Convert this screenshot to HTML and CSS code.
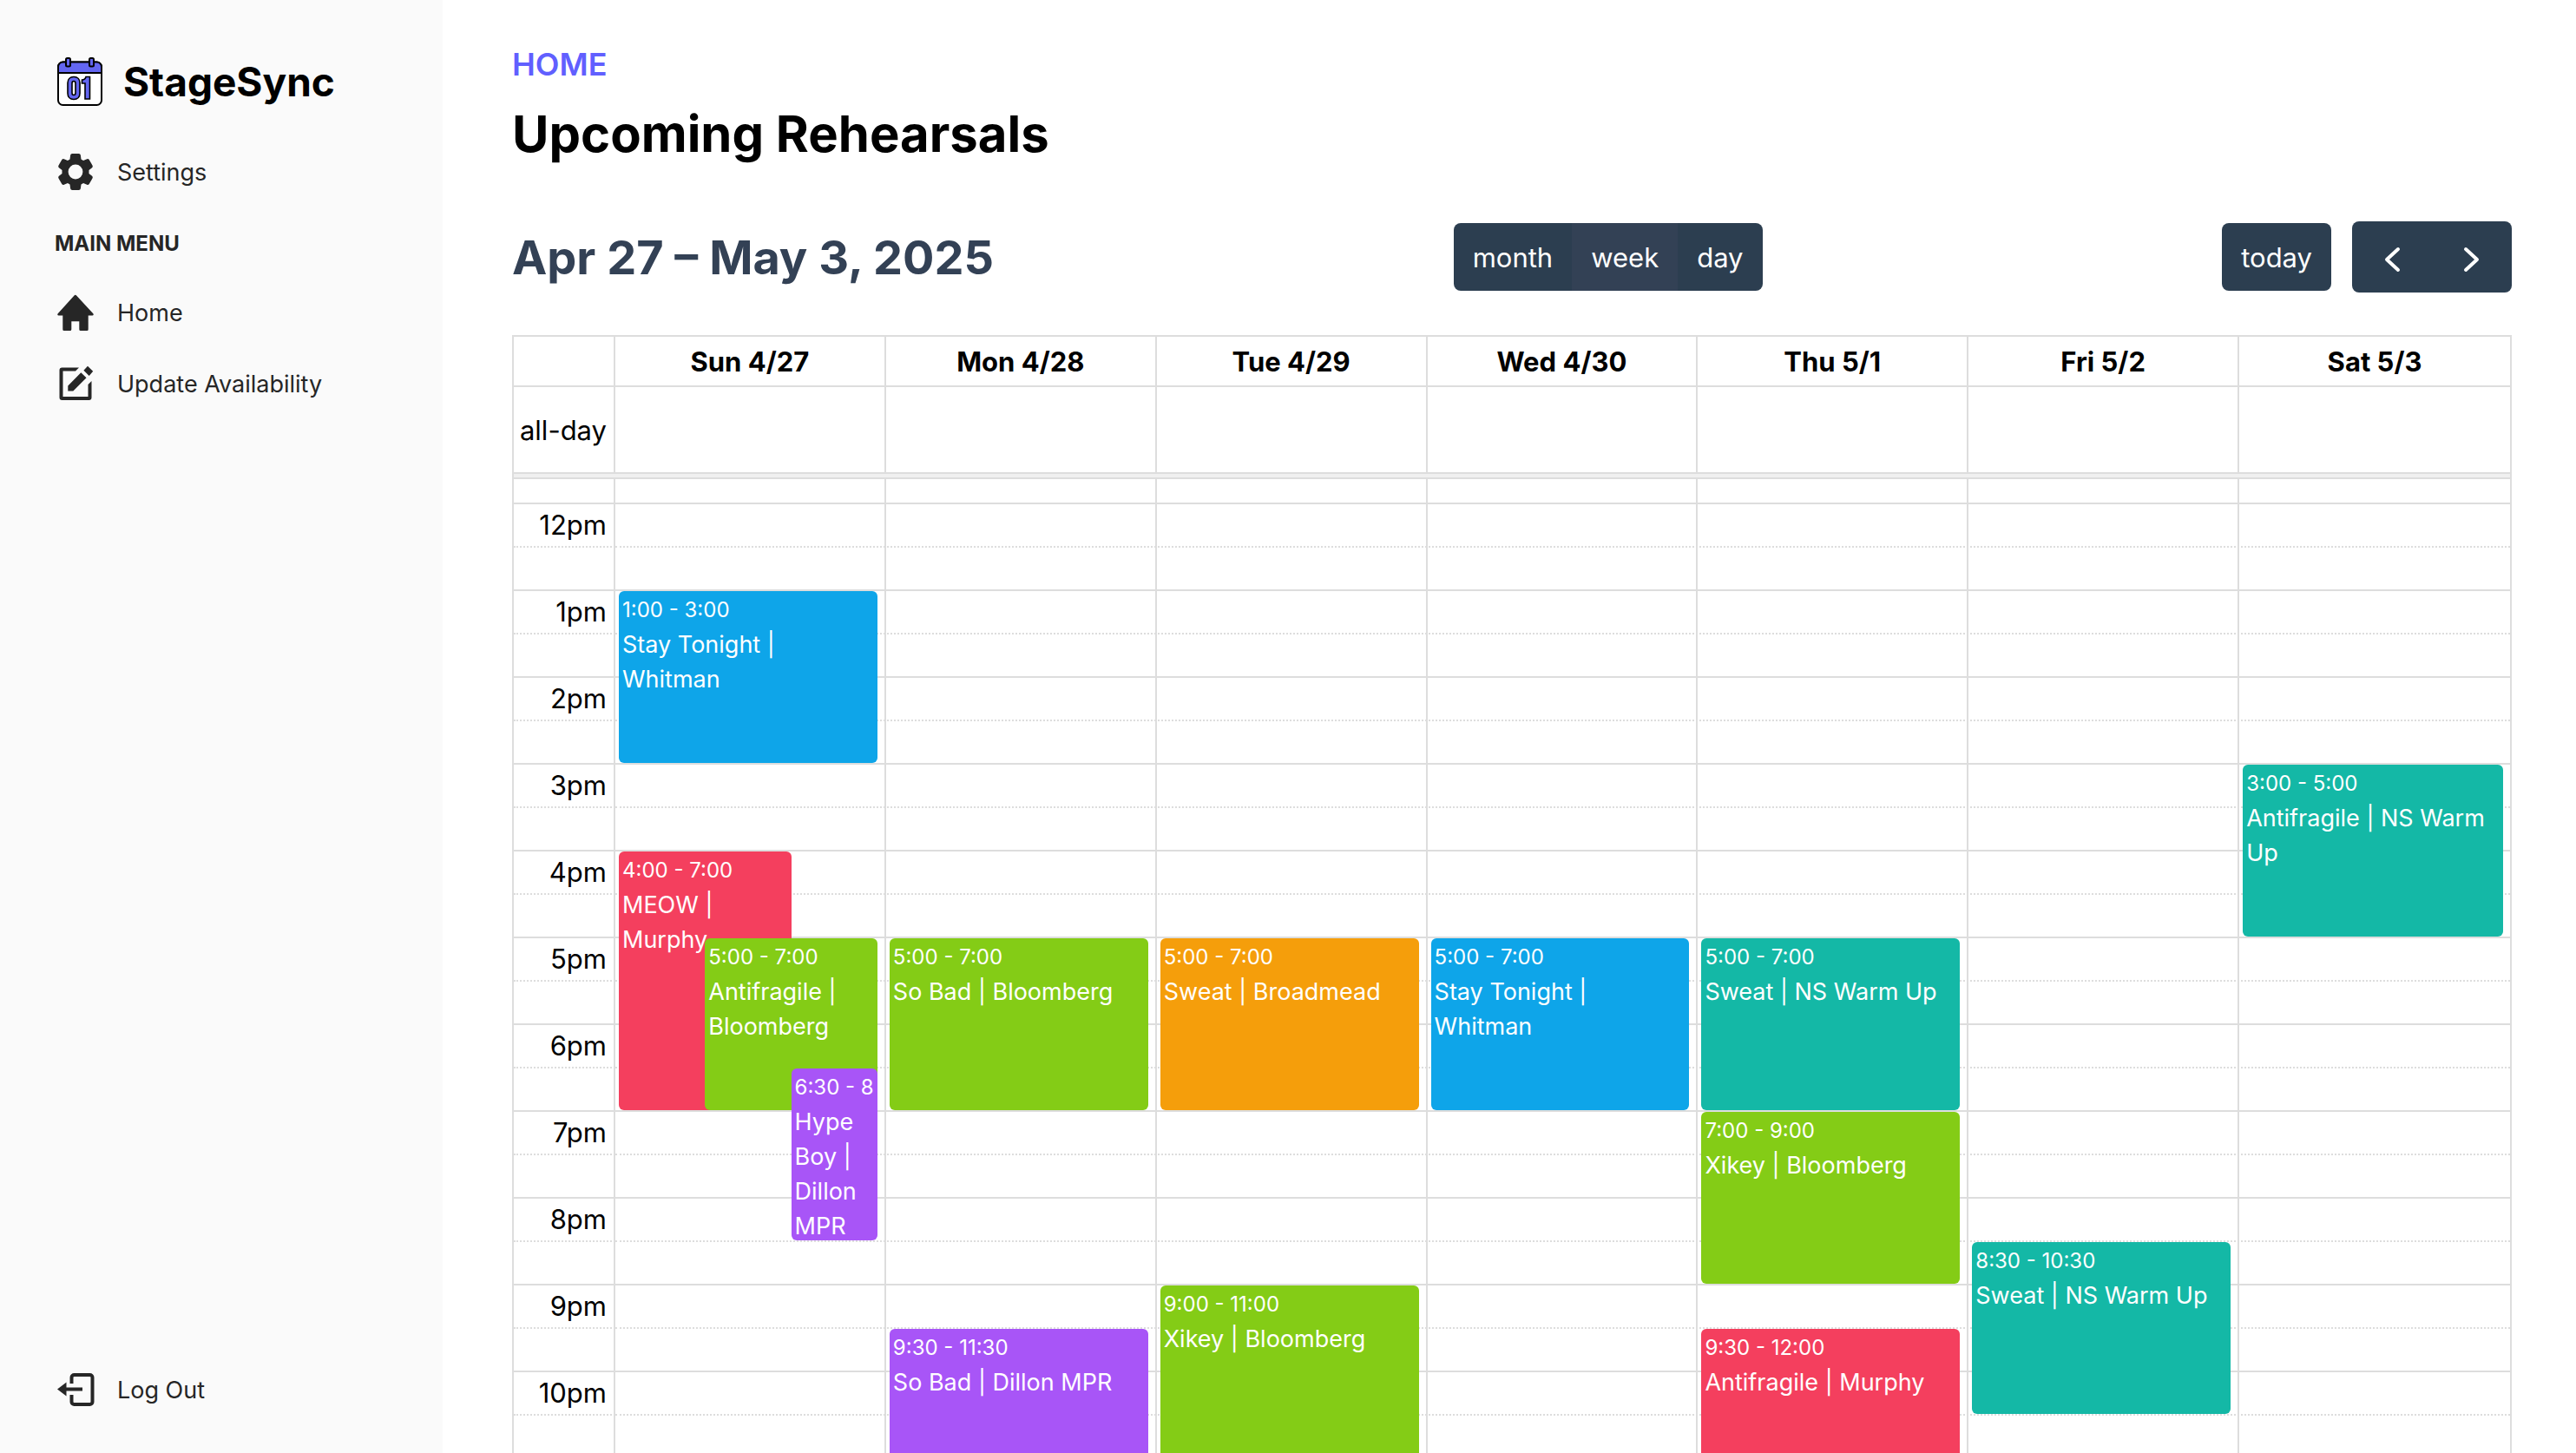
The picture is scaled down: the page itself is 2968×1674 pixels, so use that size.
FILE: index.html
```html
<!DOCTYPE html>
<html lang="en">
<head>
<meta charset="utf-8">
<meta name="viewport" content="width=device-width, initial-scale=1">
<title>StageSync</title>
<link rel="stylesheet" href="styles.css">
</head>
<body>
<div class="app">
  <aside class="sidebar">
    <a class="brand" href="#">
      <svg class="brand-icon" viewBox="0 0 52 56" aria-hidden="true">
        <rect x="1" y="5.500" width="50" height="49.500" rx="5.500" fill="#fff" stroke="#000" stroke-width="2"/>
        <path d="M1 18V11a5.500 5.500 0 0 1 5.500-5.500h39A5.500 5.500 0 0 1 51 11v7z" fill="#6366f1" stroke="#000" stroke-width="2"/>
        <rect x="10" y="1" width="5" height="9.500" rx="1.500" fill="#6366f1" stroke="#000" stroke-width="2"/>
        <rect x="37" y="1" width="5" height="9.500" rx="1.500" fill="#6366f1" stroke="#000" stroke-width="2"/>
        <path fill-rule="evenodd" d="M19 22.500c4.500 0 7 3 7 7v12c0 4-2.500 7-7 7s-7-3-7-7v-12c0-4 2.500-7 7-7zM19 27.500c-1.500 0-2 1-2 2.500v11c0 1.500.500 2.500 2 2.500s2-1 2-2.500V30c0-1.500-.500-2.500-2-2.500z" fill="#6366f1" stroke="#000" stroke-width="1.600"/>
        <path d="M33 22.500h4.500V48H32V30h-3.500v-4c2.500 0 4-1.500 4.500-3.500z" fill="#6366f1" stroke="#000" stroke-width="1.600"/>
      </svg>
      <span>StageSync</span>
    </a>
    <nav class="nav">
      <a class="nav-link" href="#">
        <svg class="icon" viewBox="1.500 1.500 21 21" aria-hidden="true"><path fill="currentColor" d="M10.200 2h3.600a1 1 0 0 1 1 .850l.3 2.200 1.200.7 2-.8a1 1 0 0 1 1.200.4l1.800 3.100a1 1 0 0 1-.2 1.300l-1.700 1.300v1.900l1.700 1.300a1 1 0 0 1 .2 1.300l-1.800 3.100a1 1 0 0 1-1.200.4l-2-.8-1.200.7-.3 2.200a1 1 0 0 1-1 .850h-3.600a1 1 0 0 1-1-.850l-.3-2.200-1.200-.7-2 .8a1 1 0 0 1-1.200-.4l-1.800-3.100a1 1 0 0 1 .2-1.300l1.700-1.300v-1.900L2.900 9.750a1 1 0 0 1-.2-1.300l1.800-3.100a1 1 0 0 1 1.200-.4l2 .8 1.200-.7.3-2.200a1 1 0 0 1 1-.850zM12 8a4 4 0 1 0 0 8 4 4 0 0 0 0-8z"/></svg>
        <span>Settings</span>
      </a>
      <h2 class="nav-heading">MAIN MENU</h2>
      <a class="nav-link" href="#">
        <svg class="icon" viewBox="0 0 44 44" aria-hidden="true"><path fill="currentColor" d="M20.500 2.500a1.800 1.800 0 0 1 2.600 0L42.300 23.300c.9 1.100.4 2.200-.9 2.200h-4.700v16a1.500 1.500 0 0 1-1.500 1.500h-7.400a1.500 1.500 0 0 1-1.500-1.500v-9.200h-9v9.200a1.500 1.500 0 0 1-1.500 1.500H8.800a1.500 1.500 0 0 1-1.500-1.500v-16H2.600c-1.300 0-1.800-1.100-.9-2.200z"/></svg>
        <span>Home</span>
      </a>
      <a class="nav-link" href="#">
        <svg class="icon" viewBox="0 0 44 44" aria-hidden="true"><path fill="currentColor" d="M26 3.500 22 7.500H7.500V37h29V23l4-4v19a3 3 0 0 1-3 3h-31a3 3 0 0 1-3-3V6.500a3 3 0 0 1 3-3zM13.300 24.500l15-15.200 6.200 6-15.200 15.200h-6zM36 1.800l6.200 6-4.500 5.200-6.300-6.300z"/></svg>
        <span>Update Availability</span>
      </a>
    </nav>
    <a class="nav-link logout" href="#">
      <svg class="icon" viewBox="0 0 44 44" aria-hidden="true"><path fill="none" stroke="currentColor" stroke-width="4" d="M17.500 15V8a3 3 0 0 1 3-3h18a3 3 0 0 1 3 3v28a3 3 0 0 1-3 3h-18a3 3 0 0 1-3-3v-8M30 21.500H8"/><path fill="currentColor" d="m1 21.500 10.500-8v16z"/></svg>
      <span>Log Out</span>
    </a>
  </aside>

  <main class="main">
    <p class="eyebrow">HOME</p>
    <h1 class="title">Upcoming Rehearsals</h1>

    <div class="toolbar">
      <h2 class="range">Apr 27 – May 3, 2025</h2>
      <div class="button-group">
        <button class="button" type="button">month</button>
        <button class="button is-active" type="button" aria-pressed="true">week</button>
        <button class="button" type="button">day</button>
      </div>
      <div class="toolbar-end">
        <button class="button" type="button">today</button>
        <div class="button-group">
          <button class="button button-icon" type="button" aria-label="Previous week"><svg class="chevron" viewBox="0 0 48 48" aria-hidden="true"><path d="M31 14 18 26l13 12"/></svg></button>
          <button class="button button-icon" type="button" aria-label="Next week"><svg class="chevron" viewBox="0 0 48 48" aria-hidden="true"><path d="m17 14 13 12-13 12"/></svg></button>
        </div>
      </div>
    </div>

    <section class="calendar" aria-label="Week calendar">
      <table class="days">
        <thead>
          <tr>
            <td class="axis"></td>
            <th scope="col">Sun 4/27</th>
            <th scope="col">Mon 4/28</th>
            <th scope="col">Tue 4/29</th>
            <th scope="col">Wed 4/30</th>
            <th scope="col">Thu 5/1</th>
            <th scope="col">Fri 5/2</th>
            <th scope="col">Sat 5/3</th>
          </tr>
        </thead>
        <tbody>
          <tr class="all-day">
            <th class="axis" scope="row">all-day</th>
            <td></td><td></td><td></td><td></td><td></td><td></td><td></td>
          </tr>
        </tbody>
      </table>
      <div class="divider"></div>
      <div class="timegrid">
        <table class="slots">
          <tbody>
            <tr class="lead"><td class="axis"></td><td></td></tr>
            <tr><th class="axis" scope="row">12pm</th><td></td></tr>
            <tr class="half"><td class="axis"></td><td></td></tr>
            <tr><th class="axis" scope="row">1pm</th><td></td></tr>
            <tr class="half"><td class="axis"></td><td></td></tr>
            <tr><th class="axis" scope="row">2pm</th><td></td></tr>
            <tr class="half"><td class="axis"></td><td></td></tr>
            <tr><th class="axis" scope="row">3pm</th><td></td></tr>
            <tr class="half"><td class="axis"></td><td></td></tr>
            <tr><th class="axis" scope="row">4pm</th><td></td></tr>
            <tr class="half"><td class="axis"></td><td></td></tr>
            <tr><th class="axis" scope="row">5pm</th><td></td></tr>
            <tr class="half"><td class="axis"></td><td></td></tr>
            <tr><th class="axis" scope="row">6pm</th><td></td></tr>
            <tr class="half"><td class="axis"></td><td></td></tr>
            <tr><th class="axis" scope="row">7pm</th><td></td></tr>
            <tr class="half"><td class="axis"></td><td></td></tr>
            <tr><th class="axis" scope="row">8pm</th><td></td></tr>
            <tr class="half"><td class="axis"></td><td></td></tr>
            <tr><th class="axis" scope="row">9pm</th><td></td></tr>
            <tr class="half"><td class="axis"></td><td></td></tr>
            <tr><th class="axis" scope="row">10pm</th><td></td></tr>
            <tr class="half"><td class="axis"></td><td></td></tr>
          </tbody>
        </table>
        <div class="columns">
          <div class="column">
            <a class="event sky" href="#" style="--start:3;--slots:4"><span class="time">1:00 - 3:00</span><span class="name">Stay Tonight | Whitman</span></a>
            <a class="event rose lane-first" href="#" style="--start:9;--slots:6"><span class="time">4:00 - 7:00</span><span class="name">MEOW | Murphy</span></a>
            <a class="event lime lane-second" href="#" style="--start:11;--slots:4"><span class="time">5:00 - 7:00</span><span class="name">Antifragile | Bloomberg</span></a>
            <a class="event purple lane-third" href="#" style="--start:14;--slots:4"><span class="time">6:30 - 8:30</span><span class="name">Hype Boy | Dillon MPR</span></a>
          </div>
          <div class="column">
            <a class="event lime" href="#" style="--start:11;--slots:4"><span class="time">5:00 - 7:00</span><span class="name">So Bad | Bloomberg</span></a>
            <a class="event purple" href="#" style="--start:20;--slots:4"><span class="time">9:30 - 11:30</span><span class="name">So Bad | Dillon MPR</span></a>
          </div>
          <div class="column">
            <a class="event amber" href="#" style="--start:11;--slots:4"><span class="time">5:00 - 7:00</span><span class="name">Sweat | Broadmead</span></a>
            <a class="event lime" href="#" style="--start:19;--slots:4"><span class="time">9:00 - 11:00</span><span class="name">Xikey | Bloomberg</span></a>
          </div>
          <div class="column">
            <a class="event sky" href="#" style="--start:11;--slots:4"><span class="time">5:00 - 7:00</span><span class="name">Stay Tonight | Whitman</span></a>
          </div>
          <div class="column">
            <a class="event teal" href="#" style="--start:11;--slots:4"><span class="time">5:00 - 7:00</span><span class="name">Sweat | NS Warm Up</span></a>
            <a class="event lime" href="#" style="--start:15;--slots:4"><span class="time">7:00 - 9:00</span><span class="name">Xikey | Bloomberg</span></a>
            <a class="event rose" href="#" style="--start:20;--slots:5"><span class="time">9:30 - 12:00</span><span class="name">Antifragile | Murphy</span></a>
          </div>
          <div class="column">
            <a class="event teal" href="#" style="--start:18;--slots:4"><span class="time">8:30 - 10:30</span><span class="name">Sweat | NS Warm Up</span></a>
          </div>
          <div class="column">
            <a class="event teal" href="#" style="--start:7;--slots:4"><span class="time">3:00 - 5:00</span><span class="name">Antifragile | NS Warm Up</span></a>
          </div>
        </div>
      </div>
    </section>
  </main>
</div>
</body>
</html>
```

FILE: styles.css
```css
*, *::before, *::after { box-sizing: border-box; }

body {
  margin: 0;
  background: #fff;
  color: #000;
  font-family: Inter, "Liberation Sans", sans-serif;
  font-size: 31px;
  line-height: 48px;
}

h1, h2, p { margin: 0; }
a { color: inherit; text-decoration: none; }

.app {
  display: grid;
  grid-template-columns: 510px minmax(0, 1fr);
  height: 100vh;
  overflow: hidden;
}

/* Sidebar */
.sidebar {
  display: flex;
  flex-direction: column;
  padding: 64px 48px 44px 63px;
  background: #fafafa;
  color: #262626;
}

.brand {
  display: flex;
  align-items: center;
  gap: 24px;
  height: 60px;
  padding-left: 3px;
  color: #000;
  font-size: 46px;
  font-weight: 700;
}
.brand-icon { width: 52px; height: 56px; }

.nav {
  display: flex;
  flex-direction: column;
  margin-top: 45px;
}
.nav-link {
  display: flex;
  align-items: center;
  gap: 26px;
  height: 58px;
  margin-bottom: 24px;
  padding-left: 2px;
  font-size: 27px;
}
.nav-link span { padding-top: 2px; }
.nav-heading {
  height: 48px;
  margin-top: 6px;
  margin-bottom: 26px;
  font-size: 24px;
  font-weight: 700;
}
.icon { width: 44px; height: 44px; }
.logout { margin-top: auto; margin-bottom: 0; }

/* Page header */
.main {
  padding: 50px 74px 0 80px;
  overflow: hidden;
}
.eyebrow {
  color: #615fff;
  font-size: 36px;
  font-weight: 600;
}
.title {
  margin-top: 20px;
  font-size: 58px;
  font-weight: 700;
  line-height: 72px;
}

.toolbar {
  display: flex;
  align-items: center;
  justify-content: space-between;
  margin: 65px 0 49px;
}
.range {
  padding-top: 2px;
  color: #334155;
  font-size: 54px;
  font-weight: 700;
}
.toolbar-end {
  display: flex;
  align-items: center;
  gap: 24px;
}
.button-group {
  display: flex;
  overflow: hidden;
  border-radius: 8px;
}
.button {
  height: 78px;
  padding: 2px 22px 0;
  border: 0;
  border-radius: 8px;
  background: #2c3e50;
  color: #fff;
  font: inherit;
}
.button-group .button { border-radius: 0; }
.button.is-active { background: #334155; }
.button-icon { height: 82px; }
.chevron {
  display: block;
  width: 48px;
  height: 48px;
  fill: none;
  stroke: #fff;
  stroke-width: 4;
  stroke-linecap: round;
  stroke-linejoin: round;
}

/* Calendar */
.calendar {
  border: 2px solid #ddd;
  border-bottom: 0;
}
table {
  width: 100%;
  border-spacing: 0;
  table-layout: fixed;
}
th, td { padding: 0; }

.days th, .days td {
  height: 58px;
  padding-top: 2px;
  border-right: 2px solid #ddd;
  border-bottom: 2px solid #ddd;
}
.days th:last-child, .days td:last-child { border-right: 0; }
.days .all-day th, .days .all-day td { height: 100px; }
.days .axis, .slots .axis {
  width: 117px;
  padding-right: 8px;
  border-right: 2px solid #ddd;
  font-weight: 400;
  text-align: right;
}
.divider {
  height: 6px;
  border-bottom: 2px solid #ddd;
  background: #f0f0f0;
}

.timegrid {
  display: grid;
  align-items: start;
}
.slots, .columns { grid-area: 1 / 1; }
.slots th, .slots td {
  height: 50px;
  border-top: 2px solid #ddd;
}
.slots .half td { border-top-style: dotted; }
.slots .lead td { height: 27px; border-top: 0; }

.columns {
  display: grid;
  grid-template-columns: repeat(7, minmax(0, 1fr));
  margin-left: 117px;
}
.column {
  display: grid;
  grid-template-columns: repeat(3, minmax(0, 1fr));
  grid-template-rows: repeat(24, 50px);
  padding: 29px 8px 0 4px;
  border-right: 2px solid #ddd;
}
.column:last-child { border-right: 0; }

.event {
  grid-column: 1 / -1;
  grid-row: var(--start) / span var(--slots);
  display: flex;
  flex-direction: column;
  gap: 2px;
  margin-bottom: 2px;
  padding: 4px 4px 0;
  overflow: hidden;
  border-radius: 6px;
  color: #fff;
}
.lane-first { grid-column: 1 / span 2; }
.lane-second { grid-column: 2 / span 2; }
.lane-third { grid-column: 3; }
.time {
  flex: none;
  overflow: hidden;
  font-size: 24px;
  line-height: 36px;
  white-space: nowrap;
}
.name {
  flex: none;
  font-size: 27px;
  line-height: 40px;
}

.sky { background: #0ea5e9; }
.rose { background: #f43f5e; }
.lime { background: #84cc16; }
.purple { background: #a855f7; }
.amber { background: #f59e0b; }
.teal { background: #14b8a6; }
```
